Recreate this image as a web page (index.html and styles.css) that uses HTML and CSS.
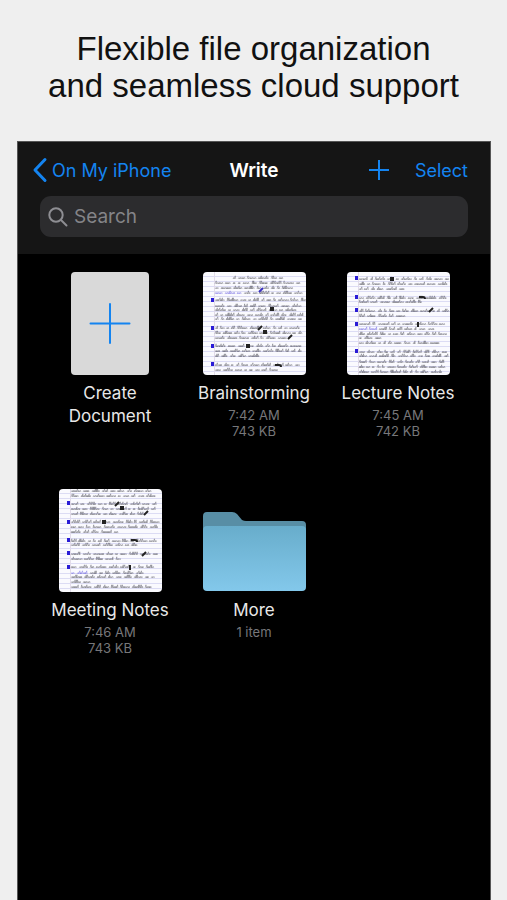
FILE: index.html
```html
<!DOCTYPE html>
<html lang="en">
<head>
  <meta charset="UTF-8">
  <meta name="viewport" content="width=device-width, initial-scale=1">
  <title>Write</title>
  <link rel="stylesheet" href="styles.css">
</head>
<body>
  <h1 class="headline">Flexible file organization<br>and seamless cloud support</h1>

  <main class="phone">
    <header class="topbar">
      <nav class="nav">
        <a class="back" href="#">
          <svg width="16" height="26" viewBox="0 0 16 26"><path d="M13 2.500 3 13l10 10.500" /></svg>
          <span>On My iPhone</span>
        </a>
        <h2 class="title">Write</h2>
        <div class="actions">
          <button type="button" class="add" aria-label="Add">
            <svg width="20" height="20" viewBox="0 0 20 20"><path d="M10 0v20M0 10h20" /></svg>
          </button>
          <button type="button">Select</button>
        </div>
      </nav>
      <label class="search">
        <svg width="20" height="20" viewBox="0 0 20 20"><circle cx="8" cy="8" r="6.700" /><path d="M13 13l5.500 5.500" /></svg>
        <input type="search" placeholder="Search" aria-label="Search">
      </label>
    </header>

    <!-- Files -->
    <section class="files">
      <button type="button" class="file">
        <span class="thumb">
          <svg class="blank" width="78" height="103" viewBox="0 0 78 103"><path d="M39 32v39M19.500 51.500h39" /></svg>
        </span>
        <span class="name">Create<br>Document</span>
      </button>
      <a class="file" href="#">
        <span class="thumb"><svg class="page" data-page="brainstorming" width="103" height="103" viewBox="0 0 103 103"></svg></span>
        <span class="name">Brainstorming</span>
        <span class="meta">7:42 AM<br>743 KB</span>
      </a>
      <a class="file" href="#">
        <span class="thumb"><svg class="page" data-page="lecture" width="103" height="103" viewBox="0 0 103 103"></svg></span>
        <span class="name">Lecture Notes</span>
        <span class="meta">7:45 AM<br>742 KB</span>
      </a>
      <a class="file" href="#">
        <span class="thumb"><svg class="page" data-page="meeting" width="103" height="103" viewBox="0 0 103 103"></svg></span>
        <span class="name">Meeting Notes</span>
        <span class="meta">7:46 AM<br>743 KB</span>
      </a>
      <a class="file" href="#">
        <span class="thumb">
          <svg width="103" height="81" viewBox="0 0 103 81">
            <defs>
              <linearGradient id="front" x1="0" y1="0" x2="0" y2="1">
                <stop offset="0" stop-color="#68adcb" />
                <stop offset="1" stop-color="#83c8eb" />
              </linearGradient>
            </defs>
            <path fill="#588ea5" d="M0 5q0-4 4-4h25q3 0 5 2l5 6q2 1 4 1h56q4 0 4 4v20H0z" />
            <path fill="url(#front)" d="M0 19q0-4 4-4h95q4 0 4 4v57q0 4-4 4H4q-4 0-4-4z" />
          </svg>
        </span>
        <span class="name">More</span>
        <span class="meta">1 item</span>
      </a>
    </section>
  </main>

  <script src="pages.js"></script>
</body>
</html>
```
FILE: styles.css
```css
* { box-sizing: border-box; }
body {
  margin: 0;
  min-height: 100vh;
  display: flex;
  flex-direction: column;
  background: #efefef;
  font-family: Inter, "Liberation Sans", sans-serif;
}
h1, h2 { margin: 0; font-weight: normal; }
a { color: inherit; text-decoration: none; }
button {
  padding: 0;
  border: none;
  background: none;
  color: inherit;
  font: inherit;
  cursor: pointer;
}
svg { display: block; flex: none; }

.headline {
  padding: 30px 16px 37px;
  color: #111;
  font-family: "Liberation Sans", Arial, sans-serif;
  font-size: 33px;
  line-height: 37px;
  text-align: center;
}

.phone {
  flex: 1;
  margin: 0 16px 0 17px;
  border: 1px solid #555;
  border-bottom: none;
  background: #000;
}

.topbar { padding: 12px 22px 17px; background: #151515; }
.nav {
  display: grid;
  grid-template-columns: 1fr auto 1fr;
  align-items: center;
  height: 32px;
  margin: 0 -8px;
  color: #1484f0;
  font-size: 18px;
}
.back { display: flex; align-items: center; gap: 4px; white-space: nowrap; }
.back svg { fill: none; stroke: #1484f0; stroke-width: 3; stroke-linecap: round; stroke-linejoin: round; }
.title { color: #fff; font-size: 19px; font-weight: 600; }
.actions { display: flex; align-items: center; justify-content: flex-end; gap: 26px; padding-right: 8px; }
.add svg { stroke: #1484f0; stroke-width: 2; }

.search {
  display: flex;
  align-items: center;
  gap: 6px;
  height: 41px;
  margin-top: 10px;
  padding: 0 8px;
  border-radius: 11px;
  background: #2c2c2e;
}
.search svg { fill: none; stroke: #8e8e93; stroke-width: 2; stroke-linecap: round; }
.search input {
  flex: 1;
  min-width: 0;
  padding: 0;
  border: none;
  outline: none;
  background: none;
  color: #fff;
  font: inherit;
  font-size: 19px;
}
.search input::placeholder { color: #848488; opacity: 1; }

.files {
  display: grid;
  grid-template-columns: repeat(3, 1fr);
  row-gap: 50px;
  padding: 18px 20px;
}
.file { display: flex; flex-direction: column; align-items: center; text-align: center; }
.thumb { display: flex; align-items: flex-end; height: 103px; margin-bottom: 7px; }
.blank { border-radius: 4px; background: #d9d9d9; stroke: #1484f0; stroke-width: 2; stroke-linecap: round; }
.page { border-radius: 4px; background: #fafafe; }
.name { color: #e8e8e8; font-size: 17px; line-height: 23px; }
.meta { margin-top: 2px; color: #77777a; font-size: 13px; line-height: 16px; }

/* handwritten pages */
.rule { stroke: #dcdcf4; stroke-width: 1; }
.margin { stroke: #e2dcea; stroke-width: 1; }
.ink { fill: none; stroke: #33333d; stroke-width: 0.4; opacity: 0.8; }
.ink.blue { stroke: #4a40d8; }
.bullet { fill: #2a1cd6; }
.tool { fill: none; stroke: #222; stroke-width: 2; }
.tool.blue { stroke: #3a30c0; }
```
FILE: pages.js
```js
// lines: [y, start x, end x, blue until x]
// bullets: y, tools: [x, y, kind]
const pages = {
  brainstorming: {
    lines: [[6, 30, 79], [11, 12, 96], [16, 12, 94], [21, 12, 101, 36], [28, 12, 102], [34, 12, 100], [38, 12, 94],
      [43, 12, 100], [47, 12, 98], [56, 12, 101], [61, 12, 99], [66, 12, 86], [74, 12, 101], [79, 12, 98],
      [84, 12, 58], [93, 12, 99], [98, 12, 78]],
    bullets: [28, 56, 74, 92],
    tools: [[58, 18, 'pen blue'], [69, 37, 'box'], [57, 56, 'pen'], [62, 60, 'box'], [87, 65, 'pen'], [45, 74, 'box'], [75, 93, 'undo']]
  },
  lecture: {
    lines: [[7, 12, 101], [12, 12, 99], [17, 12, 58], [26, 12, 99], [30, 12, 78], [39, 12, 101], [44, 12, 60],
      [52, 12, 97], [57, 12, 91, 28], [62, 12, 99], [66, 12, 34], [71, 12, 91], [80, 12, 99], [84, 12, 101],
      [90, 12, 100], [95, 12, 99], [100, 12, 97]],
    bullets: [6, 25, 38, 52, 79],
    tools: [[45, 7, 'box'], [75, 25, 'undo'], [84, 38, 'pen'], [71, 52, 'bin']]
  },
  meeting: {
    lines: [[2, 12, 97], [7, 12, 99], [15, 12, 101], [20, 12, 99], [25, 12, 86], [33, 12, 101], [38, 12, 99],
      [43, 12, 58], [52, 12, 99], [56, 12, 78], [65, 12, 101], [70, 12, 60], [78, 12, 98], [84, 12, 86, 28],
      [88, 12, 99], [93, 12, 34], [98, 12, 92]],
    bullets: [14, 33, 51, 64, 78],
    tools: [[58, 15, 'pen'], [63, 19, 'box'], [87, 24, 'pen'], [45, 33, 'box'], [75, 51, 'undo'], [85, 65, 'pen'], [71, 78, 'bin']]
  }
};

const tools = {
  pen: 'm-2 2 4-4',
  box: 'm-1-2v4m2-4v4',
  undo: 'm-3 0h4q2 0 2 2',
  bin: 'm0-2v5'
};

let seed = 7;
function random() {
  seed = (seed * 16807) % 2147483647;
  return seed / 2147483647;
}

// one word of slanted scribble, starting at x on the baseline y
function word(x, y, length) {
  let d = `M${x} ${y}`;
  let end = x;
  while (end < x + length) {
    const up = random() < 0.3 ? 3.2 : 1.6;
    const step = 0.9 + random() * 0.9;
    d += `l${step * 0.7} ${-up}l${step * 0.3} ${up}`;
    end += step;
  }
  return d;
}

document.querySelectorAll('[data-page]').forEach(svg => {
  const page = pages[svg.dataset.page];
  let out = '';
  for (let y = 4; y < 103; y += 5) {
    out += `<path class="rule" d="M0 ${y}.5h103"/>`;
  }
  out += '<path class="margin" d="M11.5 0v103"/>';

  page.lines.forEach(([y, start, end, blueEnd = 0]) => {
    let x = start;
    while (x < end - 2) {
      const length = Math.min(2 + Math.floor(random() * 9), end - x);
      out += `<path class="ink ${x < blueEnd ? 'blue' : ''}" d="${word(x, y + 1, length)}"/>`;
      x += length + 3;
    }
  });
  page.bullets.forEach(y => {
    out += `<rect class="bullet" x="8" y="${y - 2}" width="3" height="4"/>`;
  });
  page.tools.forEach(([x, y, kind]) => {
    const name = kind.split(' ')[0];
    out += `<path class="tool ${kind}" d="M${x} ${y}${tools[name]}"/>`;
  });
  svg.innerHTML = out;
});
```
